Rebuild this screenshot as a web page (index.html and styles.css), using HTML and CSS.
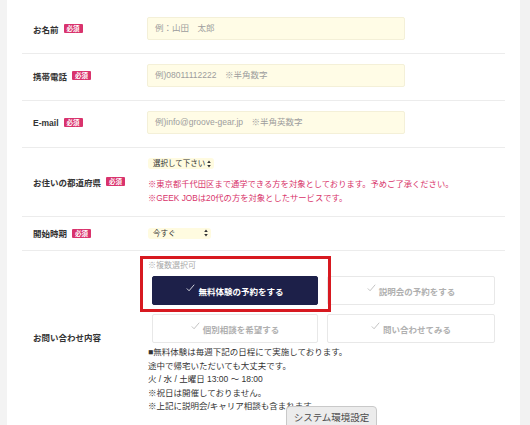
FILE: index.html
```html
<!DOCTYPE html>
<html lang="ja">
<head>
<meta charset="utf-8">
<title>お問い合わせ</title>
<link rel="stylesheet" href="styles.css">
</head>
<body>
<div class="page">
  <div class="side side-left"></div>
  <main class="content">
    <div class="form">
      <div class="row">
        <div class="label">お名前<span class="badge">必須</span></div>
        <div class="field"><div class="input">例：山田　太郎</div></div>
      </div>
      <div class="row">
        <div class="label">携帯電話<span class="badge">必須</span></div>
        <div class="field"><div class="input">例)08011112222　※半角数字</div></div>
      </div>
      <div class="row">
        <div class="label">E-mail<span class="badge">必須</span></div>
        <div class="field"><div class="input">例)info@groove-gear.jp　※半角英数字</div></div>
      </div>
      <div class="row row-pref">
        <div class="label">お住いの都道府県<span class="badge">必須</span></div>
        <div class="field">
          <div class="select select-pref"><span>選択して下さい</span><svg class="arrows" viewBox="0 0 4 8" width="4" height="8"><path d="M2 0.5 L3.8 3 L0.2 3 Z M2 7.5 L3.8 5 L0.2 5 Z" fill="#333"/></svg></div>
          <p class="warn">※東京都千代田区まで通学できる方を対象としております。予めご了承ください。<br>※GEEK JOBは20代の方を対象としたサービスです。</p>
        </div>
      </div>
      <div class="row row-start">
        <div class="label">開始時期<span class="badge">必須</span></div>
        <div class="field">
          <div class="select select-start"><span>今すぐ</span><svg class="arrows" viewBox="0 0 4 8" width="4" height="8"><path d="M2 0.5 L3.8 3 L0.2 3 Z M2 7.5 L3.8 5 L0.2 5 Z" fill="#333"/></svg></div>
        </div>
      </div>
      <div class="row row-inquiry">
        <div class="label">お問い合わせ内容</div>
        <div class="field">
          <div class="note">※複数選択可</div>
          <div class="choices">
            <div class="choice active"><svg class="check" viewBox="0 0 10 9" width="9" height="8"><polyline points="0.8,5 3.4,7.6 9.2,0.8" fill="none" stroke="#fff" stroke-width="0.9"/></svg>無料体験の予約をする</div>
            <div class="choice"><svg class="check" viewBox="0 0 10 9" width="9" height="8"><polyline points="0.8,5 3.4,7.6 9.2,0.8" fill="none" stroke="#b5b5b5" stroke-width="0.9"/></svg>説明会の予約をする</div>
            <div class="choice"><svg class="check" viewBox="0 0 10 9" width="9" height="8"><polyline points="0.8,5 3.4,7.6 9.2,0.8" fill="none" stroke="#b5b5b5" stroke-width="0.9"/></svg>個別相談を希望する</div>
            <div class="choice"><svg class="check" viewBox="0 0 10 9" width="9" height="8"><polyline points="0.8,5 3.4,7.6 9.2,0.8" fill="none" stroke="#b5b5b5" stroke-width="0.9"/></svg>問い合わせてみる</div>
          </div>
          <p class="info">■無料体験は毎週下記の日程にて実施しております。<br>途中で帰宅いただいても大丈夫です。<br>火 / 水 / 土曜日 13:00 〜 18:00<br>※祝日は開催しておりません。<br>※上記に説明会/キャリア相談も含まれます。</p>
        </div>
      </div>
    </div>
  </main>
  <div class="side side-right"></div>
</div>
<div class="highlight"></div>
<div class="sysbtn">システム環境設定</div>
</body>
</html>
```

FILE: styles.css
```css
html, body {
  margin: 0;
  padding: 0;
  background: #fff;
}
body {
  width: 530px;
  height: 425px;
  overflow: hidden;
  font-family: "Liberation Sans", "Noto Sans CJK JP", sans-serif;
  color: #333;
}
.page {
  display: flex;
  height: 425px;
}
.side-left {
  width: 7px;
  background: #f3f3f3;
  flex: none;
}
.side-right {
  width: 10px;
  background: #f2f2f2;
  flex: none;
}
.content {
  flex: 1;
  padding-top: 7px;
  background: #fff;
}
.form {
  margin: 0 15px;
}
.row {
  display: grid;
  grid-template-columns: 125px 1fr;
  align-items: center;
  padding: 10px 0 13px;
  border-bottom: 1px solid #ececec;
}
.label {
  padding-left: 11px;
  font-size: 8.5px;
  font-weight: 700;
  color: #333;
  display: flex;
  align-items: center;
}
.badge {
  display: inline-block;
  margin-left: 5px;
  background: #d9336d;
  color: #fff;
  font-size: 6.5px;
  font-weight: 700;
  line-height: 9px;
  height: 9px;
  padding: 0 3px;
  border-radius: 1px;
}
.input {
  width: 258px;
  height: 23px;
  box-sizing: border-box;
  background: #fffce6;
  border: 1px solid #f4f0d8;
  border-radius: 2px;
  padding-left: 7px;
  font-size: 8.5px;
  line-height: 21px;
  color: #9d9d9d;
}
.select {
  display: flex;
  align-items: center;
  justify-content: space-between;
  height: 11px;
  box-sizing: border-box;
  background: #fffbe0;
  border-radius: 3px;
  padding: 0 3px 0 5px;
  font-size: 7.5px;
  color: #333;
  line-height: 11px;
}
.select-pref {
  width: 66px;
  margin-left: 1px;
}
.select-start {
  width: 63px;
  margin-left: 1px;
}
.arrows {
  flex: none;
}
.row-pref {
  padding-bottom: 11px;
}
.warn {
  margin: 8px 0 0 1px;
  font-size: 8.3px;
  line-height: 14px;
  color: #d8336a;
}
.row-start {
  padding-bottom: 11px;
}
.row-inquiry {
  padding-bottom: 20px;
  border-bottom: none;
}
.note {
  margin-left: 1px;
  font-size: 8px;
  line-height: 10px;
  color: #aaa;
}
.choices {
  display: grid;
  grid-template-columns: 166px 168px;
  column-gap: 9px;
  row-gap: 9px;
  margin: 5px 0 0 5px;
}
.choice {
  height: 29px;
  box-sizing: border-box;
  border: 1px solid #e8e8e8;
  border-radius: 2px;
  background: #fff;
  display: flex;
  align-items: center;
  justify-content: center;
  gap: 3px;
  font-size: 8.5px;
  font-weight: 700;
  color: #b0b0b0;
}
.choice .check {
  margin-top: -5px;
}
.choice.active {
  background: #1d2049;
  border-color: #1d2049;
  color: #fff;
}
.info {
  margin: 3px 0 0 1px;
  font-size: 8.5px;
  line-height: 13.5px;
  color: #333;
}
.highlight {
  position: absolute;
  left: 140px;
  top: 256px;
  width: 191px;
  height: 56px;
  box-sizing: border-box;
  border: 3px solid #d71920;
}
.sysbtn {
  position: absolute;
  left: 286px;
  top: 406px;
  width: 91px;
  height: 24px;
  box-sizing: border-box;
  background: #ececec;
  border: 1px solid #c9c9c9;
  border-radius: 4px 4px 0 0;
  font-family: "Noto Sans CJK JP", sans-serif;
  font-size: 9.5px;
  color: #4a4a4a;
  text-align: center;
  line-height: 21px;
}
```
